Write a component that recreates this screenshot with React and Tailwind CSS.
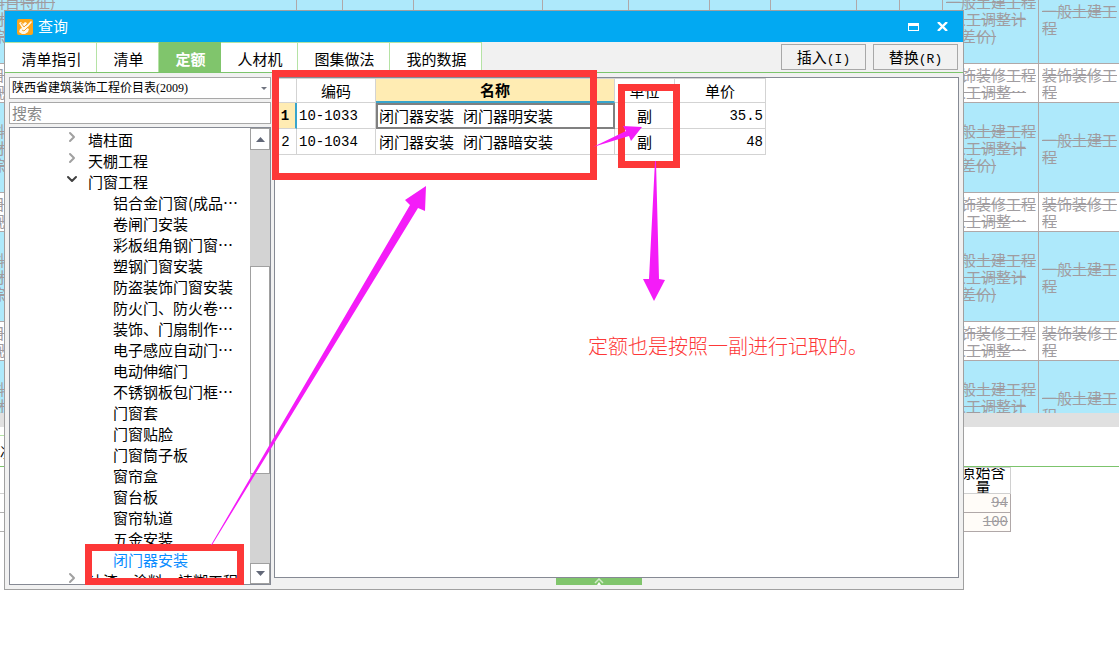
import React, { useState } from "react";
import { ChevronDown, ChevronRight } from "lucide-react";

const tabs = [
  { name: "清单指引", width: "w-[92px]" },
  { name: "清单", width: "w-[62px]" },
  { name: "定额", width: "w-[62px]" },
  { name: "人材机", width: "w-[77px]" },
  { name: "图集做法", width: "w-[92px]" },
  { name: "我的数据", width: "w-[92px]" },
];

const groups = [
  { name: "墙柱面", open: false },
  { name: "天棚工程", open: false },
  {
    name: "门窗工程",
    open: true,
    children: [
      "铝合金门窗(成品…",
      "卷闸门安装",
      "彩板组角钢门窗…",
      "塑钢门窗安装",
      "防盗装饰门窗安装",
      "防火门、防火卷…",
      "装饰、门扇制作…",
      "电子感应自动门…",
      "电动伸缩门",
      "不锈钢板包门框…",
      "门窗套",
      "门窗贴脸",
      "门窗筒子板",
      "窗帘盒",
      "窗台板",
      "窗帘轨道",
      "五金安装",
      "闭门器安装",
    ],
  },
  { name: "油漆、涂料、裱糊工程", open: false },
];

const quotas = [
  { code: "10-1033", name: "闭门器安装", detail: "闭门器明安装", unit: "副", price: "35.5" },
  { code: "10-1034", name: "闭门器安装", detail: "闭门器暗安装", unit: "副", price: "48" },
];

const feeRows = ["civil", "decor", "civil", "decor", "civil", "decor", "civil"];

function FeeRow({ kind }) {
  const civil = kind === "civil";
  const cell = "border-r border-b border-[#b0a8a8] p-0";
  return (
    <tr className={civil ? "h-[90px] bg-[#aee9fb]" : "h-[39px] bg-white"}>
      <td className={cell}>
        {civil ? <>料目特征)<br />材料种类<br />综合单价</> : <>目特征<br />规格</>}
      </td>
      {Array.from({ length: 9 }, (_, i) => (
        <td key={i} className={cell}></td>
      ))}
      <td className={`${cell} pl-[3px]`}>
        {civil ? (
          <>一般土建工程<br />(人工调整计<br />取差价)</>
        ) : (
          <>装饰装修工程<br />(人工调整…</>
        )}
      </td>
      <td className={`${cell} pl-[3px]`}>
        {civil ? <>一般土建工<br />程</> : <>装饰装修工<br />程</>}
      </td>
    </tr>
  );
}

function Background() {
  return (
    <div className="text-[#a09ca0]">
      <div className="h-[413px] overflow-hidden">
        <table className="-mt-[26px] -ml-[10px] w-[calc(100%+15px)] table-fixed border-separate border-spacing-0 text-[15px] leading-[17px] line-through whitespace-nowrap">
          <colgroup>
            <col className="w-[307px]" />
            <col className="w-[46px]" />
            <col className="w-[71px]" />
            <col className="w-[129px]" />
            <col className="w-[86px]" />
            <col className="w-[81px]" />
            <col className="w-[61px]" />
            <col className="w-[86px]" />
            <col className="w-[43px]" />
            <col className="w-[43px]" />
            <col className="w-[96px]" />
            <col />
          </colgroup>
          <tbody>
            {feeRows.map((kind, i) => (
              <FeeRow key={i} kind={kind} />
            ))}
          </tbody>
        </table>
      </div>
      <div className="h-[14px] bg-[#e0e0e0]"></div>
      <div className="mt-2 h-8 border-b border-[#7cc46c] text-sm text-black">
        <div className="w-[60px] border-t border-[#b5e3a5] leading-[30px]">况</div>
      </div>
      <table className="w-[1011px] table-fixed border-separate border-spacing-0 text-right text-[15px]">
        <colgroup>
          <col />
          <col className="w-[55px]" />
        </colgroup>
        <thead>
          <tr className="h-[27px]">
            <th className="border-b border-[#d0d0d0] p-0"></th>
            <th className="border-t border-r border-b border-[#d0d0d0] p-0 text-center font-normal text-black">
              <div className="h-[25px] overflow-hidden leading-[15px]">
                <div className="-mt-1">原始含量</div>
              </div>
            </th>
          </tr>
        </thead>
        <tbody className="font-['Liberation_Mono'] text-sm leading-[18px] line-through">
          {["94", "100"].map((n) => (
            <tr key={n}>
              <td className="border-b border-[#b0b0b0] p-0"></td>
              <td className="border-r border-b border-[#b0a8a8] bg-[#fffcf8] p-0 pr-[2px]">{n}</td>
            </tr>
          ))}
        </tbody>
      </table>
    </div>
  );
}

function Logo() {
  return (
    <svg width="16" height="16" viewBox="0 0 16 16">
      <rect width="16" height="16" rx="2" fill="#fba51c" />
      <path d="M2 4l2-1 2 2 2-2 2 1-1 3 5-5 1 1-5 6 2 1-1 3-3 2H5l-3-2 1-3 2-1z" fill="#fff8e8" />
      <path d="M4 4l3 4 3-3M5 11l2 1 4-4" stroke="#f5a030" strokeWidth="1" fill="none" />
    </svg>
  );
}

function TitleBar() {
  return (
    <header className="flex h-[31px] items-center bg-[#02a9f2] pl-3 text-white">
      <Logo />
      <h1 className="ml-[5px] flex-1 text-[15px]">查询</h1>
      <button type="button" aria-label="最大化" className="mr-[18px]">
        <svg width="11" height="8" viewBox="0 0 11 8">
          <path d="M0 0h11v8H0zM1 3v4h9V3z" fill="#fff" fillRule="evenodd" />
        </svg>
      </button>
      <button type="button" aria-label="关闭" className="mr-[15px]">
        <svg width="11" height="9" viewBox="0 0 11 9">
          <path d="M1 0l9 9M10 0l-9 9" stroke="#fff" strokeWidth="2.4" />
        </svg>
      </button>
    </header>
  );
}

function TabBar({ tab, setTab }) {
  return (
    <div className="flex h-[31px] items-end border-b border-[#7cc46c]">
      {tabs.map((t) => (
        <button
          key={t.name}
          type="button"
          onClick={() => setTab(t.name)}
          className={`h-[30px] pt-[3px] pl-[2px] text-[15px] border-t border-r ${t.width} ${
            tab === t.name
              ? "border-[#80c56c] bg-[#80c56c] font-bold text-white"
              : "border-[#b5e3a5] bg-white text-black"
          }`}
        >
          {t.name}
        </button>
      ))}
      <div className="flex flex-1 justify-end gap-[7px] self-start pt-[2px] pr-[5px]">
        <button type="button" className="h-[26px] w-[85px] border border-[#a8a8a8] text-[15px] leading-6">
          插入<span className="font-['Liberation_Mono'] text-[13px]">(I)</span>
        </button>
        <button type="button" className="h-[26px] w-[85px] border border-[#a8a8a8] text-[15px] leading-6">
          替换<span className="font-['Liberation_Mono'] text-[13px]">(R)</span>
        </button>
      </div>
    </div>
  );
}

function Sidebar() {
  const [current, setCurrent] = useState("闭门器安装");

  return (
    <aside className="flex w-[262px] shrink-0 flex-col">
      <div className="relative">
        <select
          aria-label="定额库"
          className="block h-[22px] w-full appearance-none border border-[#a8a8a8] bg-white pl-[2px] font-['Liberation_Serif','Noto_Sans_CJK_SC',serif] text-xs text-black"
        >
          <option>陕西省建筑装饰工程价目表(2009)</option>
        </select>
        <svg className="pointer-events-none absolute top-[10px] right-1" width="6" height="3" viewBox="0 0 6 3">
          <path d="M0 0h6L3 3z" fill="#707480" />
        </svg>
      </div>
      <input
        type="text"
        placeholder="搜索"
        aria-label="搜索"
        className="mt-[3px] h-[22px] w-full border border-[#a8a8a8] bg-white px-[2px] text-[15px] text-black placeholder:text-[#888888]"
      />
      <div className="mt-[3px] flex h-[458px] border border-[#868a94] bg-white">
        <ul className="min-w-0 flex-1 overflow-hidden pt-px text-[15px] leading-[21px] whitespace-nowrap">
          {groups.map((g) => (
            <li key={g.name}>
              <button type="button" className="flex h-[21px] pl-[54px]">
                {g.open ? (
                  <ChevronDown className="mr-[8px] text-[#404040]" size={16} strokeWidth={3} />
                ) : (
                  <ChevronRight className="mr-[8px] text-[#a0a0a0]" size={16} strokeWidth={3} />
                )}
                {g.name}
              </button>
              {g.children && (
                <ul>
                  {g.children.map((name) => (
                    <li key={name} className="h-[21px] pl-[103px]">
                      <button
                        type="button"
                        onClick={() => setCurrent(name)}
                        className={current === name ? "text-[#0a8cff]" : "text-black"}
                      >
                        {name}
                      </button>
                    </li>
                  ))}
                </ul>
              )}
            </li>
          ))}
        </ul>
        <div className="flex w-[20px] flex-col bg-[#d3d3d3]">
          <button type="button" aria-label="向上" className="flex h-[22px] items-center justify-center border border-[#a0a0a0] bg-white">
            <svg width="9" height="5" viewBox="0 0 9 5">
              <path d="M0 5h9L4.500 0z" fill="#626878" />
            </svg>
          </button>
          <div className="mt-[116px] h-[208px] border border-[#a0a0a0] bg-white"></div>
          <button type="button" aria-label="向下" className="mt-auto flex h-[21px] items-center justify-center border border-[#a0a0a0] bg-white">
            <svg width="9" height="5" viewBox="0 0 9 5">
              <path d="M0 0h9L4.500 5z" fill="#626878" />
            </svg>
          </button>
        </div>
      </div>
    </aside>
  );
}

function QuotaTable() {
  const cell = "border-r border-b border-[#d3d3d3] p-0";
  return (
    <table className="w-[491px] table-fixed border-separate border-spacing-0 border-t border-[#d3d3d3] text-[15px] leading-5 text-black">
      <colgroup>
        <col className="w-[22px]" />
        <col className="w-[79px]" />
        <col className="w-[239px]" />
        <col className="w-[60px]" />
        <col className="w-[91px]" />
      </colgroup>
      <thead>
        <tr className="h-[24px]">
          <th className={cell}></th>
          <th className={`${cell} font-normal`}>编码</th>
          <th className="border-r border-b-2 border-r-[#d3d3d3] border-b-[#38a4cc] bg-[#ffecb3] p-0 font-bold">名称</th>
          <th className={`${cell} font-normal`}>单位</th>
          <th className={`${cell} font-normal`}>单价</th>
        </tr>
      </thead>
      <tbody>
        {quotas.map((q, i) => (
          <tr key={q.code} className="h-[26px]">
            <td
              className={
                i === 0
                  ? "border-r-2 border-b border-r-[#38a4cc] border-b-[#d3d3d3] bg-[#ffecb3] p-0 text-center font-['Liberation_Mono'] text-sm font-bold"
                  : `${cell} text-center font-['Liberation_Mono'] text-sm`
              }
            >
              {i + 1}
            </td>
            <td className={`${cell} pl-[2px] font-['Liberation_Mono'] text-sm`}>{q.code}</td>
            <td className={i === 0 ? "border-2 border-[#808080] p-0 pl-px" : `${cell} pl-[3px]`}>
              <span className="mr-[9px]">{q.name}</span>
              {q.detail}
            </td>
            <td className={`${cell} text-center`}>{q.unit}</td>
            <td className={`${cell} pr-[2px] text-right font-['Liberation_Mono'] text-sm`}>{q.price}</td>
          </tr>
        ))}
      </tbody>
    </table>
  );
}

function QueryDialog() {
  const [tab, setTab] = useState("定额");

  return (
    <section className="absolute top-[10px] right-[155px] left-1 border border-[#a0a0a0] bg-[#f1f1f1] pb-1">
      <TitleBar />
      <TabBar tab={tab} setTab={setTab} />
      <div className="flex gap-[3px] pt-1 pr-1 pl-1">
        <Sidebar />
        <main className="flex min-w-0 flex-1 flex-col">
          <div className="h-[501px] border border-[#868a94] bg-white">
            <QuotaTable />
          </div>
          <button type="button" aria-label="展开" className="ml-[282px] flex h-[7px] w-[86px] items-end justify-center bg-[#80c56c]">
            <svg width="10" height="7" viewBox="0 0 10 7">
              <path d="M1 5l4-4 4 4" stroke="#d0ecc8" strokeWidth="1.500" fill="none" />
              <path d="M3 7l2-3 2 3z" fill="#fff" />
            </svg>
          </button>
        </main>
      </div>
    </section>
  );
}

// red frames, arrows and the remark drawn over the dialog
function Annotations() {
  return (
    <div className="pointer-events-none">
      <div className="absolute top-[70px] left-[272px] h-[110px] w-[325px] border-7 border-[#fd3838]"></div>
      <div className="absolute top-[84px] left-[618px] h-[84px] w-[62px] border-7 border-[#fd3838]"></div>
      <div className="absolute top-[544px] left-[85px] h-[41px] w-[159px] border-7 border-[#fd3838]"></div>
      <svg className="absolute top-0 left-0" width="700" height="600" viewBox="0 0 700 600" fill="#f41cf8">
        <path d="M211 545L410 205L405 200L426 186L425 211L418 208L212 545z" />
        <path d="M593 147L626 131L623 126L642 127L631 141L629 136z" />
        <path d="M655 161L649 279L643 279L654 301L665 280L659 279L656 161z" />
      </svg>
      <p className="absolute top-[331px] left-[588px] text-xl leading-[30px] font-light whitespace-nowrap text-[#fd3838]">
        定额也是按照一副进行记取的。
      </p>
    </div>
  );
}

export default function App() {
  return (
    <div lang="zh-CN" className="relative min-h-screen overflow-hidden bg-white font-['Noto_Sans_CJK_SC',sans-serif] text-black">
      <Background />
      <QueryDialog />
      <Annotations />
    </div>
  );
}
